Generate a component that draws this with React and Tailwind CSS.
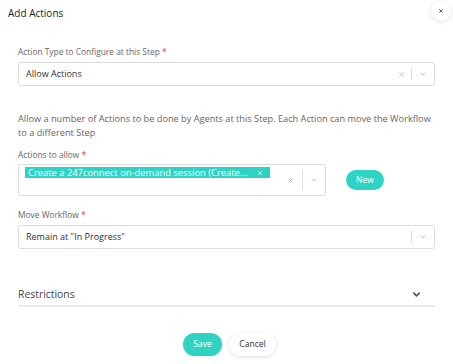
import { X, ChevronDown } from "lucide-react";

// Small select with clear + dropdown indicators
function SelectBox({ value, clearable }) {
  return (
    <div className="mt-[5px] flex h-[24px] items-center rounded-[3px] border border-[#dcdcdc] bg-white pl-[7px]">
      <span className="flex-1 text-[9px] text-[#333]">{value}</span>
      {clearable && <X className="mr-[6px] h-[7px] w-[7px] text-[#b3b3b3]" strokeWidth={3} />}
      <span className="h-[12px] w-px bg-[#dcdcdc]" />
      <ChevronDown className="mx-[7px] h-[8px] w-[8px] text-[#b3b3b3]" strokeWidth={2.5} />
    </div>
  );
}

function Label({ children, className }) {
  return (
    <p className={`text-[8.4px] leading-[10px] text-[#666] ${className}`}>
      {children} <span className="text-[#e53935]">*</span>
    </p>
  );
}

export default function App() {
  return (
    <div className="relative h-[364px] w-[453px] overflow-hidden bg-white font-['Open_Sans',sans-serif]">
      {/* Header */}
      <div className="px-[8px] pt-[6px]">
        <h1 className="text-[10px] leading-[14px] text-[#222]">Add Actions</h1>
      </div>
      <button className="absolute left-[431px] top-[1px] flex h-[20px] w-[20px] items-center justify-center rounded-full bg-white shadow-[0_1px_4px_rgba(0,0,0,0.12)]">
        <X className="h-[6px] w-[6px] text-[#333]" strokeWidth={3} />
      </button>

      <div className="px-[18px]">
        <Label className="mt-[27px]">Action Type to Configure at this Step</Label>
        <SelectBox value="Allow Actions" clearable />

        <p className="mt-[26px] w-[417px] text-[9.2px] leading-[13.5px] text-[#666]">
          Allow a number of Actions to be done by Agents at this Step. Each Action can move the Workflow to a
          different Step
        </p>

        <Label className="mt-[11px]">Actions to allow</Label>
        <div className="mt-[4px] flex items-center">
          <div className="flex h-[32px] w-[308px] rounded-[3px] border border-[#dcdcdc] bg-white">
            <div className="flex-1 pl-[6px] pt-[2px]">
              <span className="flex h-[11px] w-[245px] items-center justify-between bg-[#2fd3c3] pl-[3px] pr-[7px] text-[9.4px] leading-[11px] text-white">
                <span>Create a 247connect on-demand session (Create...</span>
                <X className="h-[6px] w-[6px]" strokeWidth={3.5} />
              </span>
            </div>
            <div className="flex items-center">
              <X className="mr-[8px] h-[7px] w-[7px] text-[#b3b3b3]" strokeWidth={3} />
              <span className="h-[20px] w-px bg-[#dcdcdc]" />
              <ChevronDown className="mx-[7px] h-[8px] w-[8px] text-[#b3b3b3]" strokeWidth={2.5} />
            </div>
          </div>
          <button className="ml-[20px] h-[20px] w-[38px] rounded-full bg-[#2fd3c3] text-[8.5px] text-white">
            New
          </button>
        </div>

        <Label className="mt-[14px]">Move Workflow</Label>
        <SelectBox value={'Remain at "In Progress"'} />

        {/* Restrictions accordion */}
        <div className="mt-[38px] flex h-[20px] items-start justify-between border-b-2 border-[#ebebeb]">
          <span className="text-[10.4px] leading-[14px] text-[#444]">Restrictions</span>
          <ChevronDown className="mr-[13px] mt-[2px] h-[11px] w-[11px] text-[#555]" strokeWidth={3.5} />
        </div>

        <div className="mt-[26px] flex justify-center gap-[7px] pl-[6px]">
          <button className="h-[23px] w-[39px] rounded-full bg-[#2fd3c3] text-[8.5px] text-white">Save</button>
          <button className="h-[23px] w-[47px] rounded-full bg-white text-[8.5px] text-[#333] shadow-[0_1px_4px_rgba(0,0,0,0.12)]">
            Cancel
          </button>
        </div>
      </div>
    </div>
  );
}
